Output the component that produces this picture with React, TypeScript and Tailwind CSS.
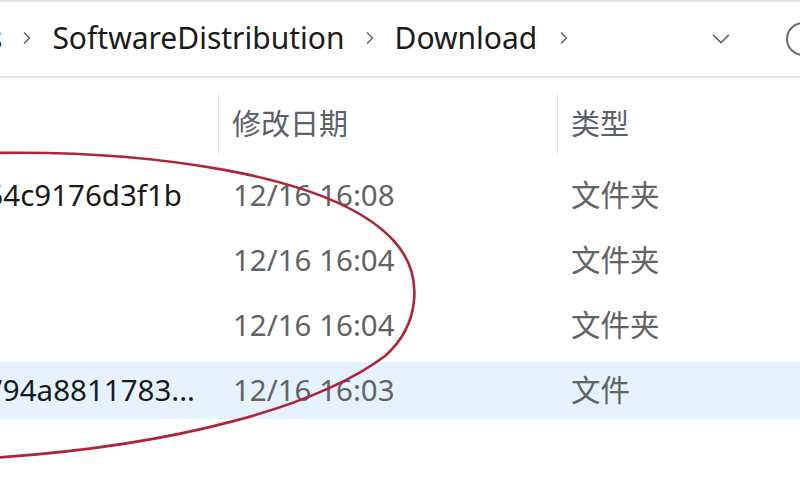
import { ChevronRight, ChevronDown } from 'lucide-react'

type Row = {
  name: string
  date: string
  type: string
  selected?: boolean
  pad: string
}

const rows: Row[] = [
  { name: 'e1a0b7f3d254c9176d3f1b', date: '12/16 16:08', type: '文件夹', pad: 'pr-[36px]' },
  { name: '', date: '12/16 16:04', type: '文件夹', pad: 'pr-[36px]' },
  { name: '', date: '12/16 16:04', type: '文件夹', pad: 'pr-[36px]' },
  { name: '3b0c2d9e1f794a8811783...', date: '12/16 16:03', type: '文件', selected: true, pad: 'pr-[23px]' },
]

const uiFont = { fontFamily: '"Noto Sans", "Noto Sans CJK SC", sans-serif' }

export default function App() {
  return (
    <div className="relative w-[800px] h-[500px] overflow-hidden bg-white text-[#1b1b1b]" style={uiFont}>
      {/* address bar */}
      <div className="h-[78px] border-t-2 border-b-2 border-[#e3e3e3] flex items-center text-[30px] whitespace-nowrap">
        <div className="flex items-center -ml-[12px] -mt-[3px]">
          <span>s</span>
          <ChevronRight className="w-5 h-5 mx-[15px] text-[#6b6b6b]" strokeWidth={2} />
          <span>SoftwareDistribution</span>
          <ChevronRight className="w-5 h-5 mx-[15px] text-[#6b6b6b]" strokeWidth={2} />
          <span>Download</span>
          <ChevronRight className="w-5 h-5 ml-[17px] text-[#6b6b6b]" strokeWidth={2} />
        </div>
        <div className="ml-auto flex items-center gap-[50px] -mr-[20px]">
          <ChevronDown className="w-[30px] h-[30px] text-[#5f5f5f]" strokeWidth={1.3} />
          <div className="w-[34px] h-[34px] rounded-full border-2 border-[#6b6b6b]" />
        </div>
      </div>

      {/* column header */}
      <div className="flex mt-[16px] h-[60px] text-[29px] text-[#5a6168]">
        <div className="w-[218px]" />
        <div className="w-[339px] border-l border-[#e5e5e5] flex items-center pl-[13px]">修改日期</div>
        <div className="flex-1 border-l border-[#e5e5e5] flex items-center pl-[13px]">类型</div>
      </div>

      {/* rows */}
      <div className="flex flex-col gap-[8px] mt-[13px]">
        {rows.map((row, i) => (
          <div key={i} className={`flex h-[57px] items-center text-[29.5px] ${row.selected ? 'bg-[#e5f2fd]' : ''}`}>
            <div className={`w-[218px] flex justify-end ${row.pad} overflow-hidden whitespace-nowrap text-[#1a1a1a]`}>
              {row.name}
            </div>
            <div className="w-[339px] pl-[15px] text-[#636363] whitespace-nowrap">{row.date}</div>
            <div className="flex-1 pl-[14px] text-[#636363]">{row.type}</div>
          </div>
        ))}
      </div>

      {/* hand-drawn highlight */}
      <svg className="absolute inset-0 pointer-events-none" width="800" height="500" viewBox="0 0 800 500">
        <path
          d="M -10 153 C 140 150, 330 172, 393 240 C 425 274, 420 325, 385 356 C 320 405, 180 446, -10 458"
          fill="none"
          stroke="#b02537"
          strokeWidth="2.6"
          strokeLinecap="round"
        />
      </svg>
    </div>
  )
}
